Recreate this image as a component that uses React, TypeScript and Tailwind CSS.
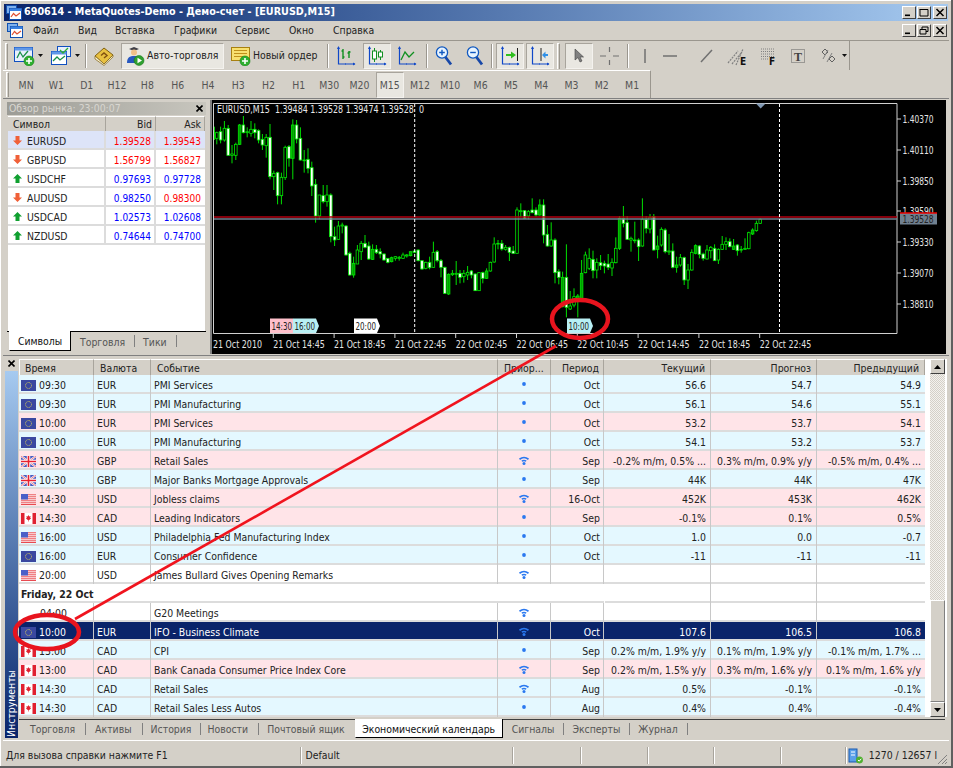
import React from 'react';

type Candle = [number, number, number, number, number];

// zoomed readings: body top, body bottom, wick top, wick bottom, kind (1 white, 0 black, 2 dark)
const segA: Candle[] = [
  [65,85,50,90,0],[68,85,65,103,0],[65,90,50,100,1],[55,90,33,95,0],[55,136,45,136,1],[132,136,105,160,0],[103,136,98,150,0],[45,103,42,105,2],[45,68,18,70,1],[65,68,52,82,0],
  [58,70,33,80,0],[58,68,40,85,1],[62,90,58,100,1],[88,105,72,120,1],[82,107,72,143,0],[82,200,42,208,1],[190,200,182,240,0],[188,257,185,283,1],[202,257,188,283,0],[112,203,107,210,0],
  [110,145,105,170,1],[45,145,28,208,2],[45,87,30,100,1],[85,150,52,152,1],[150,152,120,188,0],[148,175,115,190,1],[173,228,155,258,1],[223,318,207,338,1],[255,318,255,328,0],[257,275,225,280,1],
  [255,275,225,290,0],[255,380,250,397,1],[380,390,350,408,1],[348,388,333,390,0],[345,348,338,370,0],[348,435,345,437,1],[430,495,425,497,1],[460,495,440,503,2],[420,462,405,462,0],[400,425,393,450,0],
  [400,412,375,415,1],[408,447,395,450,1],[418,448,403,450,2],[418,428,405,432,1],[425,432,415,445,1],[432,450,430,452,1],[445,457,445,460,1],[443,455,440,457,2],[440,445,438,452,0],[442,445,438,452,0],
];
const segB: Candle[] = [
  [195,205,188,207,0],[195,198,192,203,0],[185,197,185,199,2],[183,187,182,190,1],[180,212,178,214,1],[212,237,210,240,1],[217,235,215,238,0],[217,233,200,238,1],[187,232,155,233,0],[185,212,180,217,1],
  [212,232,207,262,1],[232,310,230,312,1],[253,312,250,315,2],[250,254,240,258,0],[250,253,213,285,0],[250,262,240,280,1],[250,260,240,278,0],[247,255,228,270,0],[243,255,240,265,1],[252,302,250,303,1],
  [248,302,246,303,0],[248,265,245,280,1],[243,265,235,267,2],[217,243,215,245,0],[162,216,142,218,0],[160,162,150,178,0],[160,177,150,182,1],[172,178,165,182,0],[172,187,170,213,1],[183,190,168,192,1],
  [60,190,52,190,0],[62,65,40,82,0],[62,85,60,87,1],[65,78,60,88,0],[60,68,25,70,1],[60,75,52,80,1],[45,75,28,77,2],[45,135,28,160,1],[133,168,105,170,1],[150,168,97,170,0],
  [150,248,145,280,1],[245,262,238,283,1],[262,350,245,352,2],[262,352,163,382,1],[348,357,303,360,0],[320,345,295,352,0],[318,330,312,382,2],[250,325,210,330,2],
];
const segC: Candle[] = [
  [195,248,185,250,0],[205,235,175,240,0],[208,242,182,265,1],[217,240,205,265,0],[218,227,195,240,1],[220,228,212,250,1],[222,232,192,240,1],[217,234,205,258,0],[175,218,142,220,0],[85,175,78,180,2],
  [85,100,48,112,1],[98,148,78,150,1],[145,150,140,185,0],[150,152,95,160,0],[150,170,145,213,1],[88,168,25,170,0],[88,115,78,130,1],[82,117,72,130,0],[80,180,72,182,1],[168,178,137,205,2],
  [118,165,112,170,0],[120,185,115,190,1],[183,186,132,195,0],[183,232,160,235,1],[225,232,200,248,2],[203,225,192,230,0],[203,270,200,285,1],[240,270,222,297,0],[187,240,178,242,0],[167,190,163,193,2],
  [168,193,165,205,1],[192,205,188,212,1],[180,207,165,208,0],[172,182,168,205,0],[175,212,163,213,1],[178,210,175,222,0],[163,178,138,180,0],[155,163,142,180,0],[155,170,145,172,1],[168,178,147,180,2],
  [165,182,162,197,1],[178,180,168,188,0],[175,178,145,180,0],[128,176,125,178,0],[120,132,115,135,2],[100,122,92,125,0],[88,100,85,102,0],
];

const toY = (base: number) => (c: Candle): Candle => [base + c[0] / 3, base + c[1] / 3, base + c[2] / 3, base + c[3] / 3, c[4]];
const candles = [...segA.map(toY(110)), ...segB.map(toY(190)), ...segC.map(toY(190))];

type Flag = 'eu' | 'gb' | 'us' | 'ca' | '';
type Row = { time?: string; flag?: Flag; cur?: string; ev?: string; pr?: number; per?: string; act?: string; fc?: string; prev?: string; tone: string; day?: string };

const rows: Row[] = [
  { time: '09:30', flag: 'eu', cur: 'EUR', ev: 'PMI Services', pr: 1, per: 'Oct', act: '56.6', fc: '54.7', prev: '54.9', tone: 'bg-[#e4f8ff]' },
  { time: '09:30', flag: 'eu', cur: 'EUR', ev: 'PMI Manufacturing', pr: 1, per: 'Oct', act: '56.1', fc: '54.6', prev: '55.1', tone: 'bg-[#e4f8ff]' },
  { time: '10:00', flag: 'eu', cur: 'EUR', ev: 'PMI Services', pr: 1, per: 'Oct', act: '53.2', fc: '53.7', prev: '54.1', tone: 'bg-[#ffe4e8]' },
  { time: '10:00', flag: 'eu', cur: 'EUR', ev: 'PMI Manufacturing', pr: 1, per: 'Oct', act: '54.1', fc: '53.2', prev: '53.7', tone: 'bg-[#e4f8ff]' },
  { time: '10:30', flag: 'gb', cur: 'GBP', ev: 'Retail Sales', pr: 2, per: 'Sep', act: '-0.2% m/m, 0.5% ...', fc: '0.3% m/m, 0.9% y/y', prev: '-0.5% m/m, 0.4% ...', tone: 'bg-[#ffe4e8]' },
  { time: '10:30', flag: 'gb', cur: 'GBP', ev: 'Major Banks Mortgage Approvals', pr: 1, per: 'Sep', act: '44K', fc: '44K', prev: '47K', tone: 'bg-[#e4f8ff]' },
  { time: '14:30', flag: 'us', cur: 'USD', ev: 'Jobless claims', pr: 2, per: '16-Oct', act: '452K', fc: '453K', prev: '462K', tone: 'bg-[#ffe4e8]' },
  { time: '14:30', flag: 'ca', cur: 'CAD', ev: 'Leading Indicators', pr: 1, per: 'Sep', act: '-0.1%', fc: '0.1%', prev: '0.5%', tone: 'bg-[#ffe4e8]' },
  { time: '16:00', flag: 'us', cur: 'USD', ev: 'Philadelphia Fed Manufacturing Index', pr: 1, per: 'Oct', act: '1.0', fc: '0.0', prev: '-0.7', tone: 'bg-[#e4f8ff]' },
  { time: '16:00', flag: 'eu', cur: 'EUR', ev: 'Consumer Confidence', pr: 1, per: 'Oct', act: '-11', fc: '-11', prev: '-11', tone: 'bg-[#e4f8ff]' },
  { time: '20:00', flag: 'us', cur: 'USD', ev: 'James Bullard Gives Opening Remarks', pr: 2, tone: 'bg-white' },
  { day: 'Friday, 22 Oct', tone: 'bg-white' },
  { time: '04:00', flag: '', ev: 'G20 Meetings', pr: 2, tone: 'bg-white' },
  { time: '10:00', flag: 'eu', cur: 'EUR', ev: 'IFO - Business Climate', pr: 2, per: 'Oct', act: '107.6', fc: '106.5', prev: '106.8', tone: 'bg-[#0a246a] text-white' },
  { time: '13:00', flag: 'ca', cur: 'CAD', ev: 'CPI', pr: 1, per: 'Sep', act: '0.2% m/m, 1.9% y/y', fc: '0.1% m/m, 1.9% y/y', prev: '-0.1% m/m, 1.7% ...', tone: 'bg-[#e4f8ff]' },
  { time: '13:00', flag: 'ca', cur: 'CAD', ev: 'Bank Canada Consumer Price Index Core', pr: 2, per: 'Sep', act: '0.2% m/m, 1.5% y/y', fc: '0.3% m/m, 1.6% y/y', prev: '0.1% m/m, 1.6% y/y', tone: 'bg-[#ffe4e8]' },
  { time: '14:30', flag: 'ca', cur: 'CAD', ev: 'Retail Sales', pr: 2, per: 'Aug', act: '0.5%', fc: '-0.1%', prev: '-0.1%', tone: 'bg-[#e4f8ff]' },
  { time: '14:30', flag: 'ca', cur: 'CAD', ev: 'Retail Sales Less Autos', pr: 1, per: 'Aug', act: '0.4%', fc: '0.4%', prev: '-0.4%', tone: 'bg-[#e4f8ff]' },
];

const quotes = [
  { s: 'EURUSD', up: false, bid: '1.39528', ask: '1.39543', bc: 'text-[#ff0000]', ac: 'text-[#ff0000]' },
  { s: 'GBPUSD', up: false, bid: '1.56799', ask: '1.56827', bc: 'text-[#ff0000]', ac: 'text-[#ff0000]' },
  { s: 'USDCHF', up: true, bid: '0.97693', ask: '0.97728', bc: 'text-[#0000ff]', ac: 'text-[#0000ff]' },
  { s: 'AUDUSD', up: false, bid: '0.98250', ask: '0.98300', bc: 'text-[#0000ff]', ac: 'text-[#ff0000]' },
  { s: 'USDCAD', up: true, bid: '1.02573', ask: '1.02608', bc: 'text-[#0000ff]', ac: 'text-[#0000ff]' },
  { s: 'NZDUSD', up: true, bid: '0.74644', ask: '0.74700', bc: 'text-[#0000ff]', ac: 'text-[#0000ff]' },
];

const timeframes = ['MN', 'W1', 'D1', 'H12', 'H8', 'H6', 'H4', 'H3', 'H2', 'H1', 'M30', 'M20', 'M15', 'M12', 'M10', 'M6', 'M5', 'M4', 'M3', 'M2', 'M1'];

function FlagIcon({ f }: { f: Flag }) {
  if (f === 'eu')
    return (
      <svg width="15" height="11" viewBox="0 0 15 11" className="shrink-0">
        <rect width="15" height="11" fill="#3a48a0" />
        <circle cx="7.5" cy="5.5" r="3" fill="none" stroke="#c8c060" strokeWidth="1" strokeDasharray="1 .6" />
      </svg>
    );
  if (f === 'gb')
    return (
      <svg width="15" height="11" viewBox="0 0 15 11" className="shrink-0">
        <rect width="15" height="11" fill="#4a5cc0" />
        <path d="M0 0L15 11M15 0L0 11" stroke="#fff" strokeWidth="2" />
        <path d="M0 0L15 11M15 0L0 11" stroke="#e84050" strokeWidth=".7" />
        <path d="M7.5 0V11M0 5.5H15" stroke="#fff" strokeWidth="3.4" />
        <path d="M7.5 0V11M0 5.5H15" stroke="#e82030" strokeWidth="1.6" />
      </svg>
    );
  if (f === 'us')
    return (
      <svg width="15" height="11" viewBox="0 0 15 11" className="shrink-0">
        <rect width="15" height="11" fill="#fff" />
        <path d="M0 .8H15M0 2.8H15M0 4.8H15M0 6.8H15M0 8.8H15M0 10.5H15" stroke="#e84a50" strokeWidth="1" />
        <rect width="7" height="5.5" fill="#4a60c8" />
      </svg>
    );
  if (f === 'ca')
    return (
      <svg width="15" height="11" viewBox="0 0 15 11" className="shrink-0">
        <rect width="15" height="11" fill="#fff" />
        <rect width="3.5" height="11" fill="#e02030" />
        <rect x="11.5" width="3.5" height="11" fill="#e02030" />
        <path d="M7.5 2L8.3 3.5L9.6 3L9.2 5L10.2 5.2L8.2 7H7.8V8.5H7.2V7H6.8L4.8 5.2L5.8 5L5.4 3L6.7 3.5Z" fill="#e02030" />
      </svg>
    );
  return <span className="w-[16px] shrink-0" />;
}

function Priority({ level }: { level?: number }) {
  if (!level) return null;
  if (level === 1)
    return (
      <svg width="12" height="10" viewBox="0 0 12 10">
        <circle cx="6" cy="4" r="1.9" fill="#2a78f0" />
      </svg>
    );
  return (
    <svg width="12" height="10" viewBox="0 0 12 10">
      <path d="M1.5 3.2Q6 -0.2 10.5 3.2" fill="none" stroke="#2a78f0" strokeWidth="1.7" />
      <path d="M3.8 5.2Q6 3.8 8.2 5.2" fill="none" stroke="#2a78f0" strokeWidth="1.4" />
      <circle cx="6" cy="7.6" r="1.5" fill="#2a78f0" />
    </svg>
  );
}

const Sep = ({ className }: { className: string }) => <div className={`w-[2px] h-[24px] border-l border-[#9a968e] border-r border-r-white ${className}`} />;
const Arrow = ({ className }: { className: string }) => (
  <svg width="5" height="3" viewBox="0 0 5 3" className={className}>
    <path d="M0 0H5L2.5 3Z" fill="#111" />
  </svg>
);
const Pressed = ({ className, children }: { className: string; children: React.ReactNode }) => (
  <div className={`h-[26px] flex items-center justify-center border border-[#f4f2ee] border-t-[#a8a49c] border-l-[#a8a49c] bg-[#e9e7e1] ${className}`}>{children}</div>
);

function AppIcon() {
  return (
    <svg width="16" height="15" viewBox="0 0 16 15" className="shrink-0">
      <rect x=".5" y=".5" width="10" height="8" fill="#7fb0ec" stroke="#1050b0" />
      <rect x="3.5" y="3.5" width="12" height="11" fill="#fff" stroke="#1050b0" />
      <rect x="3.5" y="3.5" width="12" height="2.5" fill="#3a80e0" />
      <path d="M5 12L7.5 8.5L10 11L14 8" fill="none" stroke="#e05030" strokeWidth="1.2" />
    </svg>
  );
}

function PlusBadge({ x, y }: { x: number; y: number }) {
  return (
    <g>
      <circle cx={x} cy={y} r="5" fill="#30b030" stroke="#108010" strokeWidth=".6" />
      <path d={`M${x - 3} ${y}H${x + 3}M${x} ${y - 3}V${y + 3}`} stroke="#fff" strokeWidth="1.6" />
    </g>
  );
}

function Axes({ children }: { children: React.ReactNode }) {
  return (
    <svg width="20" height="20" viewBox="0 0 20 20">
      <path d="M2.5 1V18H19" fill="none" stroke="#1048c8" strokeWidth="1.2" />
      <path d="M2.5 0L1 3H4ZM19.5 18L17 16.5V19.5ZM9 18.5h1v-1h-1Z" fill="#1048c8" />
      {children}
    </svg>
  );
}

function TitleBar() {
  return (
    <div className="mx-[1px] h-[17px] flex items-center bg-gradient-to-r from-[#0a246a] to-[#a6caf0] shrink-0">
      <div className="ml-[2px]"><AppIcon /></div>
      <span className="ml-[2px] text-white font-bold text-[10.7px] leading-none whitespace-nowrap">690614 - MetaQuotes-Demo - Демо-счет - [EURUSD,M15]</span>
      <div className="ml-auto mr-[1px] flex gap-[1px]">
        <WinBtn kind="min" />
        <WinBtn kind="max" />
        <div className="ml-[1px]"><WinBtn kind="close" /></div>
      </div>
    </div>
  );
}

function WinBtn({ kind }: { kind: 'min' | 'max' | 'restore' | 'close' }) {
  return (
    <div className="w-[14px] h-[13px] bg-[#d4d0c8] border border-white border-r-[#404040] border-b-[#404040] flex items-center justify-center">
      <svg width="10" height="9" viewBox="0 0 10 9">
        {kind === 'min' && <rect x="1" y="6.5" width="5" height="1.6" fill="#000" />}
        {kind === 'max' && <path d="M1 1.5H9V8H1ZM1 1V2" fill="none" stroke="#000" strokeWidth="1" />}
        {kind === 'restore' && <path d="M3 3V1H9V5.5H7M1 3.5H7V8H1Z" fill="none" stroke="#000" strokeWidth="1" />}
        {kind === 'close' && <path d="M1.5 1L8.5 8M8.5 1L1.5 8" stroke="#000" strokeWidth="1.5" />}
      </svg>
    </div>
  );
}

function MenuBar() {
  const items = [
    { t: 'Файл', w: 'w-[45px]' },
    { t: 'Вид', w: 'w-[37px]' },
    { t: 'Вставка', w: 'w-[59px]' },
    { t: 'Графики', w: 'w-[61px]' },
    { t: 'Сервис', w: 'w-[54px]' },
    { t: 'Окно', w: 'w-[44px]' },
    { t: 'Справка', w: 'w-[60px]' },
  ];
  return (
    <div className="h-[19px] flex items-center shrink-0">
      <div className="ml-[4px] w-[26px]"><AppIcon /></div>
      {items.map((m) => (
        <span key={m.t} className={`${m.w} pt-[1px] text-[10.4px] text-[#222]`}>{m.t}</span>
      ))}
      <div className="ml-auto mr-[2px] flex gap-[1px]">
        <WinBtn kind="min" />
        <WinBtn kind="restore" />
        <div className="ml-[1px]"><WinBtn kind="close" /></div>
      </div>
    </div>
  );
}

function ToolbarMain() {
  return (
    <div className="h-[29px] w-[847px] flex items-center border-r border-[#9a968e] shrink-0 text-[10.4px] text-[#222]">
      <div className="ml-[2px] w-[3px] h-[26px] border-l border-t border-white border-r border-r-[#9a968e]" />
      <svg width="21" height="20" viewBox="0 0 21 20" className="ml-[6px]">
        <rect x=".5" y="1.5" width="18" height="14" fill="#e8f0fc" stroke="#1050c0" />
        <rect x=".5" y="1.5" width="18" height="3" fill="#6098e8" />
        <path d="M3 12L6 6L9 11L14 5" fill="none" stroke="#189048" strokeWidth="1.3" />
        <PlusBadge x={15} y={15} />
      </svg>
      <Arrow className="ml-[3px]" />
      <svg width="20" height="20" viewBox="0 0 20 20" className="ml-[8px]">
        <rect x="6.5" y=".5" width="13" height="10" fill="#e8f0fc" stroke="#1050c0" />
        <rect x=".5" y="5.5" width="15" height="13" fill="#fff" stroke="#1050c0" />
        <rect x=".5" y="5.5" width="15" height="3" fill="#6098e8" />
        <path d="M2 15L6 11L9 14L14 10" fill="none" stroke="#189048" strokeWidth="1.3" />
        <path d="M9 4L12 7L17 2" fill="none" stroke="#30b030" strokeWidth="1.3" />
      </svg>
      <Arrow className="ml-[4px]" />
      <Sep className="ml-[5px]" />
      <svg width="20" height="20" viewBox="0 0 20 20" className="ml-[7px]">
        <path d="M1 10L10 2L19 9L10 18Z" fill="#e8c040" stroke="#806010" />
        <path d="M1 10V13L10 19.5L19 11V9L10 18Z" fill="#f8f0d0" stroke="#806010" strokeWidth=".7" />
        <path d="M7 9.5L10 7L13 9.5L10 12" fill="none" stroke="#805010" strokeWidth="1.4" />
      </svg>
      <Pressed className="ml-[7px] w-[103px] justify-start">
        <svg width="20" height="20" viewBox="0 0 20 20" className="ml-[3px]">
          <path d="M4 3L9 1L14 3L9 5Z" fill="#404048" />
          <circle cx="9" cy="6.5" r="3" fill="#f0c088" />
          <path d="M2 17C2 11 5 10 9 10C13 10 15 11 15 17Z" fill="#2858c0" />
          <circle cx="14" cy="14.5" r="5" fill="#30a030" stroke="#107010" strokeWidth=".5" />
          <path d="M12.5 11.8V17.2L17 14.5Z" fill="#fff" />
        </svg>
        <span className="ml-[2px] whitespace-nowrap">Авто-торговля</span>
      </Pressed>
      <svg width="20" height="20" viewBox="0 0 20 20" className="ml-[7px]">
        <rect x=".5" y="1.5" width="18" height="13" fill="#f8e070" stroke="#a88010" />
        <path d="M3 4.5H16M3 7.5H16M3 10.5H12" stroke="#c0901a" strokeWidth="1" />
        <PlusBadge x={14} y={15} />
      </svg>
      <span className="ml-[2px] w-[66px] whitespace-nowrap">Новый ордер</span>
      <Sep className="ml-[8px]" />
      <div className="ml-[7px]">
        <Axes>
          <path d="M7 3V13M5.5 5H7M7 11H8.5M13 5V12M11.5 7H13M13 6H14.5" stroke="#109020" strokeWidth="1.4" fill="none" />
        </Axes>
      </div>
      <Pressed className="ml-[7px] w-[28px]">
        <Axes>
          <path d="M7.5 2V16M13.5 4V14" stroke="#109020" />
          <rect x="5.5" y="5" width="4" height="8" fill="#fff" stroke="#109020" />
          <rect x="11.5" y="6" width="4" height="5" fill="#fff" stroke="#109020" />
        </Axes>
      </Pressed>
      <div className="ml-[6px]">
        <Axes>
          <path d="M4 14L8 6L12 11L17 6" fill="none" stroke="#109020" strokeWidth="1.3" />
        </Axes>
      </div>
      <Sep className="ml-[9px]" />
      <svg width="19" height="20" viewBox="0 0 19 20" className="ml-[7px]">
        <path d="M10 10.5L16 18.5" stroke="#1848a8" strokeWidth="2.8" />
        <circle cx="7" cy="6.5" r="5.6" fill="#e8f4ff" stroke="#1058c0" strokeWidth="1.3" />
        <path d="M4.2 6.5H9.8M7 3.7V9.3" stroke="#1058c0" strokeWidth="1.4" />
      </svg>
      <svg width="19" height="20" viewBox="0 0 19 20" className="ml-[12px]">
        <path d="M10 10.5L16 18.5" stroke="#1848a8" strokeWidth="2.8" />
        <circle cx="7" cy="6.5" r="5.6" fill="#e8f4ff" stroke="#1058c0" strokeWidth="1.3" />
        <path d="M4.2 6.5H9.8" stroke="#1058c0" strokeWidth="1.4" />
      </svg>
      <Sep className="ml-[6px]" />
      <Pressed className="ml-[3px] w-[28px]">
        <Axes>
          <path d="M17.5 2V15" stroke="#202020" />
          <path d="M6 8H11V5.5L16 9L11 12.5V10H6Z" fill="#30c020" />
        </Axes>
      </Pressed>
      <Pressed className="ml-[2px] w-[28px]">
        <Axes>
          <path d="M11 2V15" stroke="#202020" />
          <path d="M18 8H15.5V5.5L12 9L15.5 12.5V10H18Z" fill="#3090e8" />
        </Axes>
      </Pressed>
      <div className="ml-[3px] w-[3px] h-[26px] border-l border-t border-white border-r border-r-[#9a968e]" />
      <Pressed className="ml-[5px] w-[28px]">
        <svg width="12" height="16" viewBox="0 0 12 16">
          <path d="M2 1L2 12L5 9.5L7 14L9 13L7 9H10.5Z" fill="#808080" stroke="#404040" strokeWidth=".6" />
        </svg>
      </Pressed>
      <svg width="21" height="20" viewBox="0 0 21 20" className="ml-[6px]">
        <path d="M10.5 1V6M10.5 14V19M1 10H7M14 10H20" stroke="#707070" strokeWidth="1.2" />
      </svg>
      <Sep className="ml-[7px]" />
      <svg width="8" height="20" viewBox="0 0 8 20" className="ml-[12px]">
        <path d="M4 3V17" stroke="#707070" strokeWidth="1.5" />
      </svg>
      <svg width="22" height="20" viewBox="0 0 22 20" className="ml-[10px]">
        <path d="M4 10H18" stroke="#707070" strokeWidth="1.5" />
      </svg>
      <svg width="15" height="20" viewBox="0 0 15 20" className="ml-[18px]">
        <path d="M2 16L13 4" stroke="#707070" strokeWidth="1.5" />
      </svg>
      <svg width="20" height="20" viewBox="0 0 20 20" className="ml-[13px]">
        <path d="M1 17L11 5M5 18L15 6M9 19L16 3" stroke="#808080" strokeWidth="1.2" strokeDasharray="2 1" />
        <text x="13" y="18.5" fontSize="10" fontWeight="700" fill="#111">E</text>
      </svg>
      <svg width="18" height="20" viewBox="0 0 18 20" className="ml-[12px]">
        <path d="M2 3H15M2 5.5H15M2 8H15M2 10.5H15M2 13H9" stroke="#808080" strokeDasharray="1 1" />
        <text x="10" y="19" fontSize="10" fontWeight="700" fill="#111">F</text>
      </svg>
      <svg width="16" height="20" viewBox="0 0 16 20" className="ml-[13px]">
        <rect x="1.5" y="3.5" width="13" height="13" fill="none" stroke="#606060" strokeDasharray="1 1" />
        <text x="4" y="14.5" fontSize="12" fontWeight="700" fontFamily="Liberation Serif, serif" fill="#404040">T</text>
      </svg>
      <svg width="17" height="20" viewBox="0 0 17 20" className="ml-[14px]">
        <path d="M5 3L8 6L5 9L2 6ZM12 10L15 13L12 16L9 13Z" fill="none" stroke="#606060" />
        <path d="M3 13L8 4M7 16L12 7" stroke="#808080" />
      </svg>
      <Arrow className="ml-[5px]" />
    </div>
  );
}

function ToolbarPeriods() {
  return (
    <div className="h-[28px] w-[648px] flex items-center border-r border-[#9a968e] border-t border-t-white text-[10.4px] text-[#555] shrink-0">
      <div className="ml-[3px] w-[3px] h-[25px] border-l border-t border-white border-r border-r-[#9a968e]" />
      <div className="ml-[2px] flex items-center">
        {timeframes.map((t) =>
          t === 'M15' ? (
            <Pressed key={t} className="w-[28px] mx-[1.15px] pt-[2px]">{t}</Pressed>
          ) : (
            <span key={t} className="w-[30.3px] pt-[2px] text-center">{t}</span>
          )
        )}
      </div>
    </div>
  );
}

function MarketWatch() {
  return (
    <div className="ml-[4px] w-[199px] h-[252px] flex flex-col text-[10.4px] text-[#222] shrink-0 self-end">
      <div className="h-[13px] flex items-center bg-gradient-to-r from-[#9c9c96] to-[#c8c6be] shrink-0">
        <span className="ml-[2px] text-[#d8d6d0]">Обзор рынка: 23:00:07</span>
        <svg width="7" height="7" viewBox="0 0 7 7" className="ml-auto mr-[3px]">
          <path d="M.5 .5L6.5 6.5M6.5 .5L.5 6.5" stroke="#000" strokeWidth="1.6" />
        </svg>
      </div>
      <div className="mt-[1px] mx-[1px] flex-1 bg-white flex flex-col">
        <div className="h-[15px] flex bg-[#d4d0c8] shrink-0">
          <div className="w-[98px] pl-[5px] border-r border-[#a8a49c] border-t border-t-white">Символ</div>
          <div className="w-[50px] pr-[3px] text-right border-r border-[#a8a49c] border-t border-t-white">Bid</div>
          <div className="w-[49px] pr-[3px] text-right border-r border-[#a8a49c] border-t border-t-white">Ask</div>
        </div>
        {quotes.map((q, i) => (
          <div key={q.s} className={`h-[19px] flex items-center border-b-2 border-[#dcdcdc] shrink-0 ${i === 0 ? 'bg-[#dde4f8]' : ''}`}>
            <div className="w-[98px] h-full flex items-center pt-[4px] border-r-2 border-[#dcdcdc]">
              <svg width="9" height="9" viewBox="0 0 9 9" className="ml-[5px] -mt-[2px]">
                {q.up ? <path d="M4.5 0L9 4.5H6.5V9H2.5V4.5H0Z" fill="#10a030" /> : <path d="M4.5 9L9 4.5H6.5V0H2.5V4.5H0Z" fill="#f06038" />}
              </svg>
              <span className="ml-[5px]">{q.s}</span>
            </div>
            <div className={`w-[50px] h-full flex items-center justify-end pt-[4px] pr-[3px] text-[10px] border-r-2 border-[#dcdcdc] ${q.bc}`}>{q.bid}</div>
            <div className={`w-[49px] h-full flex items-center justify-end pt-[4px] pr-[4px] text-[10px] ${q.ac}`}>{q.ask}</div>
          </div>
        ))}
      </div>
      <div className="h-[23px] flex items-start border-t border-t-black shrink-0 text-[#555]">
        <div className="ml-[2px] w-[62px] h-[20px] -mt-[1px] bg-white border-l border-white border-r border-r-black border-b border-b-black text-center text-[#111] pt-[3px]">Символы</div>
        <span className="ml-[9px] mt-[3px]">Торговля</span>
        <span className="ml-[9px] mt-[3px] w-px h-[12px] bg-[#808080]" />
        <span className="ml-[8px] mt-[3px]">Тики</span>
        <span className="ml-[9px] mt-[3px] w-px h-[12px] bg-[#808080]" />
      </div>
    </div>
  );
}

function Chart() {
  const prices = [['1.40370', 119], ['1.40110', 150], ['1.39850', 181], ['1.39590', 211], ['1.39330', 242], ['1.39070', 273], ['1.38810', 304]] as const;
  const times = ['21 Oct 14:45', '21 Oct 18:45', '21 Oct 22:45', '22 Oct 02:45', '22 Oct 06:45', '22 Oct 10:45', '22 Oct 14:45', '22 Oct 18:45', '22 Oct 22:45'];
  const marks = [
    { x: 270, w: 23, fill: '#ffc0cb', t: '14:30' },
    { x: 293, w: 23, fill: '#b8f0f4', t: '16:00' },
    { x: 354, w: 23, fill: '#ffffff', t: '20:00' },
    { x: 567, w: 23, fill: '#b8f0f4', t: '10:00' },
  ];
  return (
    <div className="ml-[4px] w-[736px] h-[254px] bg-black border-l-2 border-[#808080] shrink-0">
      <svg width="734" height="254" viewBox="212 100 734 254" style={{ fontFamily: 'inherit' }} className="block">
        <path d="M213.5 103.5H897V333.5H213.5Z" fill="none" stroke="#d0d0d0" />
        {candles.map((c, i) => {
          const x = 213 + 3.8 * i;
          if (x < 214) {
            return <path key={i} d={`M214.5 ${c[2]}V${c[3]}`} stroke="#00d000" />;
          }
          const fill = c[4] === 1 ? '#ffffff' : c[4] === 2 ? '#00a000' : '#000000';
          return (
            <g key={i}>
              <path d={`M${x} ${c[2]}V${c[3]}`} stroke="#00e000" strokeWidth="1" />
              <rect x={x - 1.3} y={c[0]} width="2.6" height={Math.max(c[1] - c[0], 0.8)} fill={fill} stroke="#00e800" strokeWidth=".8" />
            </g>
          );
        })}
        <path d="M214 217H897" stroke="#b00010" strokeWidth="1.6" />
        <path d="M214 219H897" stroke="#708090" strokeWidth="1.4" />
        <path d="M414.7 104V333M779.5 104V333" stroke="#fff" strokeDasharray="3 2" />
        <path d="M756 103.5H765.5L760.7 108.5Z" fill="#7f97b2" />
        {marks.map((m) => (
          <g key={m.t}>
            <path d={`M${m.x} 318.5H${m.x + m.w}L${m.x + m.w + 3} 326L${m.x + m.w} 333H${m.x}Z`} fill={m.fill} />
            <text x={m.x + 1.5} y={329.5} fontSize="10.4" fill="#222" textLength="20.5" lengthAdjust="spacingAndGlyphs">{m.t}</text>
          </g>
        ))}
        {prices.map(([p, y]) => (
          <g key={p}>
            <path d={`M897 ${y}H901`} stroke="#d0d0d0" />
            <text x={902.5} y={y + 4} fontSize="10.4" fill="#e4e4e4" textLength="31" lengthAdjust="spacingAndGlyphs">{p}</text>
          </g>
        ))}
        <rect x="900" y="213" width="37" height="11.5" fill="#708090" />
        <path d="M900 213H937" stroke="#f00000" strokeWidth="1.6" />
        <text x={902.5} y={223} fontSize="10.4" fill="#222" textLength="31" lengthAdjust="spacingAndGlyphs">1.39528</text>
        <text x="213" y="347.5" fontSize="10.4" fill="#e4e4e4" textLength="49" lengthAdjust="spacingAndGlyphs">21 Oct 2010</text>
        {times.map((t, i) => {
          const x = 273.3 + 60.8 * i;
          return (
            <g key={t}>
              <path d={`M${x} 334V338`} stroke="#d0d0d0" />
              <text x={x} y={347.5} fontSize="10.4" fill="#e4e4e4" textLength="51.5" lengthAdjust="spacingAndGlyphs">{t}</text>
            </g>
          );
        })}
        <text x="217" y="113" fontSize="10.4" fill="#e8e8e8" xmlSpace="preserve" textLength="207" lengthAdjust="spacingAndGlyphs">EURUSD,M15  1.39484 1.39528 1.39474 1.39528  0</text>
      </svg>
    </div>
  );
}

function Toolbox() {
  const cols = 'grid grid-cols-[75px_57px_347px_53px_53px_107px_106px_108px]';
  return (
    <div className="h-[383px] mt-[1px] flex border-t border-[#808080] text-[10.4px] text-[#222] shrink-0">
      <div className="ml-[2px] w-[13px] flex flex-col shrink-0">
        <svg width="7" height="7" viewBox="0 0 7 7" className="ml-[3px] mt-[4px]">
          <path d="M.5 .5L6.5 6.5M6.5 .5L.5 6.5" stroke="#000" strokeWidth="1.6" />
        </svg>
        <div className="mt-[4px] flex-1 bg-gradient-to-b from-[#a6caf0] to-[#0a246a] flex items-end justify-center pb-[1px]">
          <span className="text-white [writing-mode:vertical-rl] rotate-180 leading-none whitespace-nowrap">Инструменты</span>
        </div>
      </div>
      <div className="ml-[1px] w-[928px] flex flex-col">
        <div className="mt-[3px] h-[358px] flex bg-white shrink-0">
          <div className="w-[906px] flex flex-col shrink-0">
            <div className={`${cols} h-[16px] bg-[#d4d0c8] shrink-0`}>
              <div className="pl-[5px] pt-[1px] border-r border-[#a8a49c] border-t border-t-white border-l border-l-white">Время</div>
              <div className="pl-[6px] pt-[1px] border-r border-[#a8a49c] border-t border-t-white">Валюта</div>
              <div className="pl-[6px] pt-[1px] border-r border-[#a8a49c] border-t border-t-white">Событие</div>
              <div className="pl-[6px] pt-[1px] border-r border-[#a8a49c] border-t border-t-white whitespace-nowrap">Приор...</div>
              <div className="pl-[11px] pt-[1px] border-r border-[#a8a49c] border-t border-t-white">Период</div>
              <div className="pr-[5px] pt-[1px] text-right border-r border-[#a8a49c] border-t border-t-white">Текущий</div>
              <div className="pr-[5px] pt-[1px] text-right border-r border-[#a8a49c] border-t border-t-white">Прогноз</div>
              <div className="pr-[5px] pt-[1px] text-right border-r border-[#a8a49c] border-t border-t-white">Предыдущий</div>
            </div>
            {rows.map((r, i) => (
              <div key={i} className={`${cols} h-[19px] border-b-2 border-[#dcdcdc] shrink-0 ${r.tone}`}>
                {r.day ? (
                  <div className="col-span-5 flex items-center pl-[2px] pt-[3px] font-bold">{r.day}</div>
                ) : (
                  <>
                    <div className="flex items-center pl-[2px] pt-[3px] border-r border-[#c8c8c8]">
                      <FlagIcon f={r.flag || ''} />
                      <span className="ml-[3px]">{r.time}</span>
                    </div>
                    <div className="flex items-center pl-[3px] pt-[3px] border-r border-[#c8c8c8]">{r.cur}</div>
                    <div className="flex items-center pl-[3px] pt-[3px] border-r border-[#c8c8c8] whitespace-nowrap overflow-hidden">{r.ev}</div>
                    <div className="flex items-center justify-center pt-[2px] border-r border-[#c8c8c8]"><Priority level={r.pr} /></div>
                    <div className="flex items-center justify-end pr-[3px] pt-[3px] border-r border-[#c8c8c8]">{r.per}</div>
                  </>
                )}
                <div className={`flex items-center justify-end pr-[4px] pt-[3px] border-r border-[#c8c8c8] whitespace-nowrap overflow-hidden ${r.day ? 'border-l border-l-white' : ''}`}>{r.act}</div>
                <div className="flex items-center justify-end pr-[4px] pt-[3px] border-r border-[#c8c8c8] whitespace-nowrap overflow-hidden">{r.fc}</div>
                <div className="flex items-center justify-end pr-[4px] pt-[3px] whitespace-nowrap overflow-hidden">{r.prev}</div>
              </div>
            ))}
          </div>
          <div className="ml-auto w-[15px] mr-[2px] flex flex-col [background:repeating-conic-gradient(#d4d0c8_0_25%,#f4f2ee_0_50%)_0_0/2px_2px]">
            <ScrollBtn up />
            <div className="flex-1" />
            <div className="h-[102px] bg-[#d4d0c8] border border-white border-r-[#808080] border-b-[#808080]" />
            <ScrollBtn />
          </div>
        </div>
        <div className="mt-[2px] h-[19px] flex items-start border-t border-t-[#404040] shrink-0 text-[#555] mr-[2px]">
          <span className="ml-[11px] mt-[2px] whitespace-nowrap">Торговля</span>
          <span className="ml-[10px] mt-[3px] w-px h-[12px] bg-[#808080]" />
          <span className="ml-[9px] mt-[2px] whitespace-nowrap">Активы</span>
          <span className="ml-[10px] mt-[3px] w-px h-[12px] bg-[#808080]" />
          <span className="ml-[8px] mt-[2px] whitespace-nowrap">История</span>
          <span className="ml-[8px] mt-[3px] w-px h-[12px] bg-[#808080]" />
          <span className="ml-[7px] mt-[2px] whitespace-nowrap">Новости</span>
          <span className="ml-[10px] mt-[3px] w-px h-[12px] bg-[#808080]" />
          <span className="ml-[8px] mt-[2px] whitespace-nowrap">Почтовый ящик</span>
          <div className="ml-[10px] w-[148px] h-[19px] -mt-[1px] bg-white border-r border-r-black border-b border-b-black border-l border-l-white text-[#111] text-center pt-[3px] whitespace-nowrap">Экономический календарь</div>
          <span className="ml-[9px] mt-[2px] whitespace-nowrap">Сигналы</span>
          <span className="ml-[9px] mt-[3px] w-px h-[12px] bg-[#808080]" />
          <span className="ml-[8px] mt-[2px] whitespace-nowrap">Эксперты</span>
          <span className="ml-[9px] mt-[3px] w-px h-[12px] bg-[#808080]" />
          <span className="ml-[8px] mt-[2px] whitespace-nowrap">Журнал</span>
          <span className="ml-[9px] mt-[3px] w-px h-[12px] bg-[#808080]" />
        </div>
      </div>
    </div>
  );
}

function ScrollBtn({ up }: { up?: boolean }) {
  return (
    <div className="h-[15px] bg-[#d4d0c8] border border-white border-r-[#404040] border-b-[#404040] flex items-center justify-center shrink-0">
      <svg width="7" height="4" viewBox="0 0 7 4">
        <path d={up ? 'M0 4H7L3.5 0Z' : 'M0 0H7L3.5 4Z'} fill="#000" />
      </svg>
    </div>
  );
}

function StatusBar() {
  const cells = ['w-[68px]', 'w-[67px]', 'w-[66px]', 'w-[67px]', 'w-[65px]'];
  return (
    <div className="mt-[2px] h-[26px] pt-[4px] flex items-center border-t border-white text-[10.4px] text-[#222] shrink-0">
      <span className="ml-[3px] w-[294px] whitespace-nowrap">Для вызова справки нажмите F1</span>
      <div className="h-[17px] w-[2px] border-l border-[#a8a49c] border-r border-r-white" />
      <span className="ml-[4px] w-[207px]">Default</span>
      {cells.map((c, i) => (
        <div key={i} className={`${c} h-[17px]`}>
          <div className="h-[17px] w-[2px] border-l border-[#a8a49c] border-r border-r-white" />
        </div>
      ))}
      <div className="h-[17px] w-[2px] border-l border-[#a8a49c] border-r border-r-white" />
      <svg width="16" height="16" viewBox="0 0 16 16" className="ml-[1px]">
        <rect x="1" y="1" width="8" height="13" fill="#5aa0e8" stroke="#1858b0" />
        <path d="M3 4H7M3 7H7" stroke="#fff" />
        <circle cx="11.5" cy="12" r="3.5" fill="#50b030" />
        <path d="M10 12L11.2 13.2L13.2 10.8" fill="none" stroke="#fff" strokeWidth="1" />
      </svg>
      <span className="ml-[5px] whitespace-nowrap">1270 / 12657 l</span>
      <svg width="11" height="11" viewBox="0 0 11 11" className="ml-auto mr-[1px] self-end mb-[1px]">
        <path d="M1 10L10 1M5 10L10 5M8 10L10 8" stroke="#808080" />
      </svg>
    </div>
  );
}

export default function App() {
  return (
    <div className="relative w-[953px] h-[768px] overflow-hidden bg-[#d4d0c8] border-r-2 border-b-2 border-[#606060] shadow-[inset_1px_1px_0_#fff] [font-family:'DejaVu_Sans_Condensed','DejaVu_Sans',sans-serif]">
      <div className="pt-[4px] pl-[3px] pr-[2px] flex flex-col">
        <TitleBar />
        <MenuBar />
        <div className="border-t border-[#9a968e]" />
        <ToolbarMain />
        <ToolbarPeriods />
        <div className="border-t border-[#808080]" />
        <div className="h-[254px] flex mt-px">
          <MarketWatch />
          <Chart />
        </div>
        <Toolbox />
        <StatusBar />
      </div>
      <svg width="953" height="768" viewBox="0 0 953 768" className="absolute left-0 top-0 pointer-events-none">
        <ellipse cx="580" cy="319" rx="28" ry="19" fill="none" stroke="#e8141e" strokeWidth="4.5" />
        <ellipse cx="47" cy="632" rx="32" ry="17" fill="none" stroke="#e8141e" strokeWidth="4.5" />
        <path d="M75 619L556 346" stroke="#f0141e" strokeWidth="2.6" />
      </svg>
    </div>
  );
}
